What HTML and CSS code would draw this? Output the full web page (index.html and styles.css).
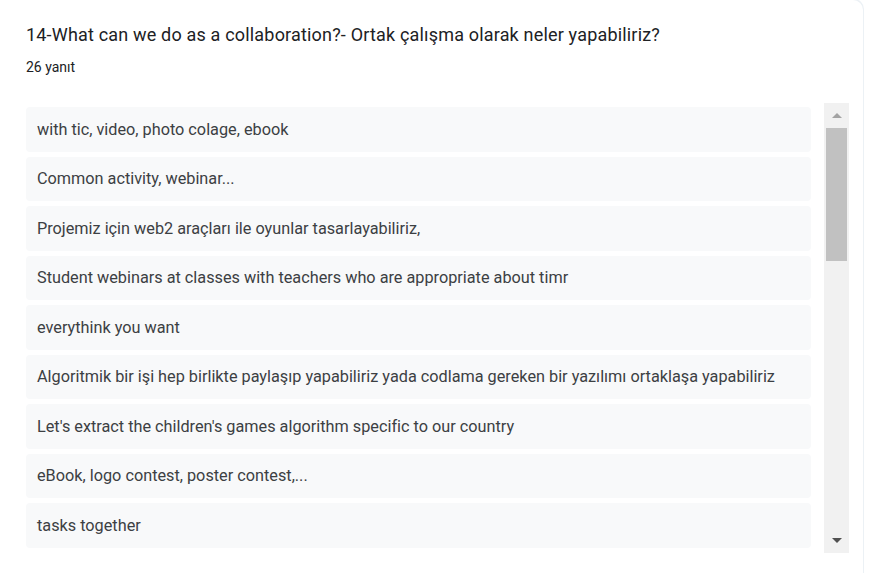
FILE: index.html
```html
<!DOCTYPE html>
<html lang="tr">
<head>
<meta charset="utf-8">
<link rel="stylesheet" href="styles.css">
</head>
<body>
<div class="card">
  <div class="title">14-What can we do as a collaboration?- Ortak çalışma olarak neler yapabiliriz?</div>
  <div class="count">26 yanıt</div>
  <div class="responses">
    <div class="list">
      <div class="item">with tic, video, photo colage, ebook</div>
      <div class="item">Common activity, webinar...</div>
      <div class="item">Projemiz için web2 araçları ile oyunlar tasarlayabiliriz,</div>
      <div class="item">Student webinars at classes with teachers who are appropriate about timr</div>
      <div class="item">everythink you want</div>
      <div class="item">Algoritmik bir işi hep birlikte paylaşıp yapabiliriz yada codlama gereken bir yazılımı ortaklaşa yapabiliriz</div>
      <div class="item">Let's extract the children's games algorithm specific to our country</div>
      <div class="item">eBook, logo contest, poster contest,...</div>
      <div class="item">tasks together</div>
    </div>
    <div class="scrollbar">
      <div class="arrow up"></div>
      <div class="thumb"></div>
      <div class="spacer"></div>
      <div class="arrow down"></div>
    </div>
  </div>
</div>
</body>
</html>
```
FILE: styles.css
```css
html, body {
  margin: 0;
  padding: 0;
  background: #ffffff;
}
.card {
  width: 863px;
  height: 574px;
  box-sizing: border-box;
  padding: 23px 0 0 26px;
  border-top-right-radius: 10px;
  box-shadow: 1px -1px 0 0 rgba(200, 215, 225, 0.35);
  background: #fff;
  font-family: Roboto, "Noto Sans", Arial, sans-serif;
}
.title {
  font-size: 18px;
  line-height: 24px;
  color: #202124;
  letter-spacing: 0.18px;
  white-space: nowrap;
}
.count {
  margin-top: 10px;
  font-size: 14px;
  line-height: 20px;
  color: #202124;
}
.responses {
  margin-top: 26px;
  height: 450px;
  display: flex;
  gap: 13px;
}
.list {
  width: 785px;
  height: 450px;
  overflow: hidden;
  padding-top: 4px;
  box-sizing: border-box;
  display: flex;
  flex-direction: column;
  gap: 5px;
}
.item {
  flex: none;
  height: 44.5px;
  box-sizing: border-box;
  padding: 0 11px;
  display: flex;
  align-items: center;
  background: #f8f9fa;
  border-radius: 4px;
  font-size: 16.25px;
  color: #3c4043;
  white-space: nowrap;
}
.scrollbar {
  width: 25px;
  height: 450px;
  background: #f1f1f1;
  display: flex;
  flex-direction: column;
  align-items: center;
}
.arrow {
  height: 25px;
  width: 25px;
  display: flex;
  align-items: center;
  justify-content: center;
  flex: none;
}
.arrow::before {
  content: "";
  width: 0;
  height: 0;
  border-left: 5px solid transparent;
  border-right: 5px solid transparent;
}
.arrow.up::before {
  border-bottom: 5px solid #a3a3a3;
}
.arrow.down::before {
  border-top: 5px solid #505050;
}
.thumb {
  width: 21px;
  height: 133px;
  background: #c1c1c1;
  flex: none;
}
.spacer {
  flex: 1;
}
```
